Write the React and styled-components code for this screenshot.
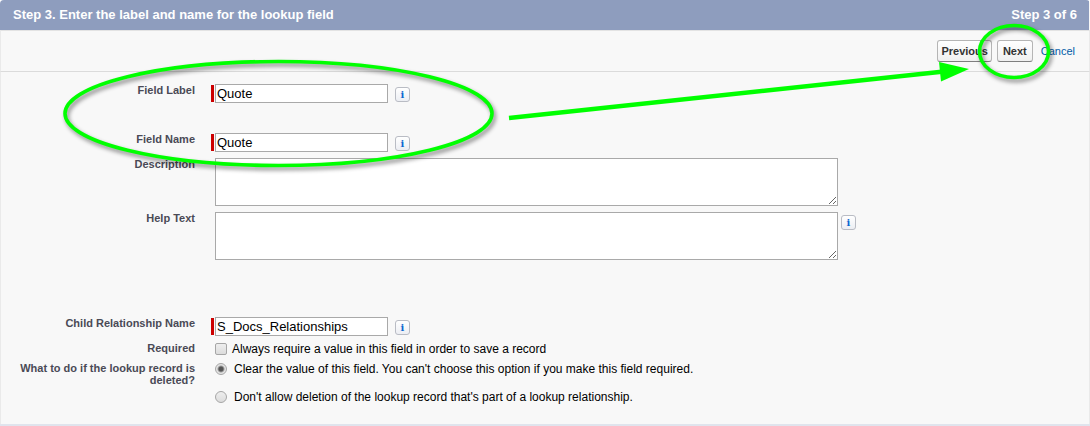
import React, { useState } from 'react'
import styled, { createGlobalStyle } from 'styled-components'

const App = () => {

const [fieldLabel, setFieldLabel] = useState('Quote');
const [fieldName, setFieldName] = useState('Quote');
const [relationship, setRelationship] = useState('S_Docs_Relationships');
const [required, setRequired] = useState(false);
const [onDelete, setOnDelete] = useState('clear');

  return (
    <Page>
      <GlobalStyle />
      <Header>
        <Title>Step 3. Enter the label and name for the lookup field</Title>
        <Title as="span">Step 3 of 6</Title>
      </Header>

      <Toolbar>
        <Button type="button">Previous</Button>
        <Button type="button">Next</Button>
        <Cancel href="#">Cancel</Cancel>
      </Toolbar>

      <Form>
        <Row $space={30}>
          <Label htmlFor="label">Field Label</Label>
          <Required />
          <TextInput id="label" value={fieldLabel} onChange={(e) => setFieldLabel(e.target.value)} />
          <Info />
        </Row>
        <Row $space={6}>
          <Label htmlFor="name">Field Name</Label>
          <Required />
          <TextInput id="name" value={fieldName} onChange={(e) => setFieldName(e.target.value)} />
          <Info />
        </Row>
        <Row $space={6}>
          <Label htmlFor="description">Description</Label>
          <TextArea id="description" />
        </Row>
        <Row $space={57}>
          <Label htmlFor="help">Help Text</Label>
          <TextArea id="help" />
          <Info $near />
        </Row>
        <Row $space={6}>
          <Label htmlFor="child">Child Relationship Name</Label>
          <Required />
          <TextInput id="child" value={relationship} onChange={(e) => setRelationship(e.target.value)} />
          <Info />
        </Row>
        <Row $space={6}>
          <Label htmlFor="required">Required</Label>
          <Choice $gap={5}>
            <Check id="required" type="checkbox" checked={required} onChange={(e) => setRequired(e.target.checked)} />
            Always require a value in this field in order to save a record
          </Choice>
        </Row>
        <Row $space={0}>
          <Label as="span" id="deleted">What to do if the lookup record is deleted?</Label>
          <Options role="radiogroup" aria-labelledby="deleted">
            <Choice $gap={7}>
              <Radio type="radio" name="deleted" checked={onDelete === 'clear'} onChange={() => setOnDelete('clear')} />
              Clear the value of this field. You can't choose this option if you make this field required.
            </Choice>
            <Choice $gap={7}>
              <Radio type="radio" name="deleted" checked={onDelete === 'deny'} onChange={() => setOnDelete('deny')} />
              Don't allow deletion of the lookup record that's part of a lookup relationship.
            </Choice>
          </Options>
        </Row>
      </Form>
      <Markup />
    </Page>
  )
};

const Info = ({ $near }) => (
  <InfoButton type="button" aria-label="Info" $near={$near}>i</InfoButton>
)

const Markup = () => (
  <Overlay width="1090" height="426" viewBox="0 0 1090 426" aria-hidden="true">
    <g fill="none" stroke="#00ff00" strokeWidth="3.6">
      <ellipse cx="278.5" cy="113.5" rx="213.5" ry="52" />
      <ellipse cx="1014" cy="51.5" rx="34.5" ry="26" />
    </g>
    <path d="M509 118 L944 71.5" stroke="#00ff00" strokeWidth="4.4" />
    <path d="M939 62 L969 69 L941 81.500 Z" fill="#00ff00" />
  </Overlay>
)

const GlobalStyle = createGlobalStyle`
  * {
    box-sizing: border-box;
  }

  body {
    margin: 0;
    background: #fff;
    font-family: "Liberation Sans", Arial, sans-serif;
    font-size: 12px;
    color: #000;
  }
`

const Page = styled.div`
  position: relative;
  background: #f8f8f8;
  border-bottom: 2px solid #e0e4ed;
  border-radius: 4px 4px 0 0;
  overflow: hidden;
`

const Header = styled.header`
  display: flex;
  justify-content: space-between;
  align-items: center;
  height: 30px;
  padding: 0 12px 0 13px;
  margin-right: 1px;
  background: #8e9dbe;
  color: #fff;
`

const Title = styled.h1`
  margin: 0;
  font-size: 13px;
  font-weight: bold;
  line-height: 16px;
`

const Toolbar = styled.div`
  display: flex;
  justify-content: flex-end;
  align-items: center;
  height: 42px;
  padding: 0 14px;
  border: 1px solid #eaeaea;
  border-bottom-color: #dbdbdb;
  border-top-color: #e3e3e3;
`

const Button = styled.button`
  height: 22px;
  margin-right: 5px;
  padding: 0 3px;
  border: 1px solid #b5b5b5;
  border-bottom-color: #7f7f7f;
  border-radius: 3px;
  background: linear-gradient(#fff, #f0f0f0);
  color: #333;
  font: bold 11px "Liberation Sans", Arial, sans-serif;
  cursor: pointer;

  & + & {
    padding: 0 5px;
    margin-right: 8px;
  }
`

const Cancel = styled.a`
  color: #015ba7;
  font-size: 11px;
  text-decoration: none;
`

const Form = styled.form`
  padding: 12px 0 20px;
  border: solid #eaeaea;
  border-width: 0 1px;
`

const Row = styled.div`
  display: flex;
  align-items: flex-start;
  margin-bottom: ${(props) => props.$space}px;
`

const Label = styled.label`
  flex: none;
  width: 214px;
  padding-left: 14px;
  padding-right: 20px;
  color: #4a4a56;
  font-size: 11px;
  font-weight: bold;
  line-height: 12px;
  text-align: right;
`

const Required = styled.span`
  width: 3px;
  height: 17px;
  margin: 1px 1px 0 -4px;
  background: #c00;
`

const TextInput = styled.input`
  width: 173px;
  height: 19px;
  padding: 0 1px;
  border: 1px solid #a9a9a9;
  background: #fff;
  color: #000;
  font: 13px "Liberation Sans", Arial, sans-serif;
`

const TextArea = styled.textarea`
  flex: 0 1 623px;
  height: 48px;
  border: 1px solid #a9a9a9;
  background: #fff;
  font: 13px "Liberation Sans", Arial, sans-serif;
`

const InfoButton = styled.button`
  width: 15px;
  height: 15px;
  margin: 3px 0 0 ${(props) => (props.$near ? 3 : 7)}px;
  padding: 0;
  border: 1px solid #b9bcc4;
  border-radius: 3px;
  background: linear-gradient(#fff, #eceef3);
  color: #0b67d0;
  font: bold 10px/12px "DejaVu Serif", serif;
  text-align: center;
`

const Options = styled.div`
  display: flex;
  flex-direction: column;
  gap: 14px;
`

const Choice = styled.label`
  display: flex;
  align-items: center;
  gap: ${(props) => props.$gap}px;
  line-height: 14px;
`

const Check = styled.input`
  appearance: none;
  width: 12px;
  height: 12px;
  margin: 0;
  border: 1px solid #a6a6a6;
  border-radius: 2px;
  background: linear-gradient(#eee, #dcdcdc);

  &:checked {
    background: #666;
  }
`

const Radio = styled(Check)`
  border-radius: 50%;

  &:checked {
    background: radial-gradient(circle, #555 0 2px, #e4e4e4 4px);
  }
`

const Overlay = styled.svg`
  position: absolute;
  top: 0;
  left: 0;
  pointer-events: none;

  ellipse {
    filter: drop-shadow(2px 3px 2px rgba(0, 0, 0, 0.45));
  }
`

export default App
